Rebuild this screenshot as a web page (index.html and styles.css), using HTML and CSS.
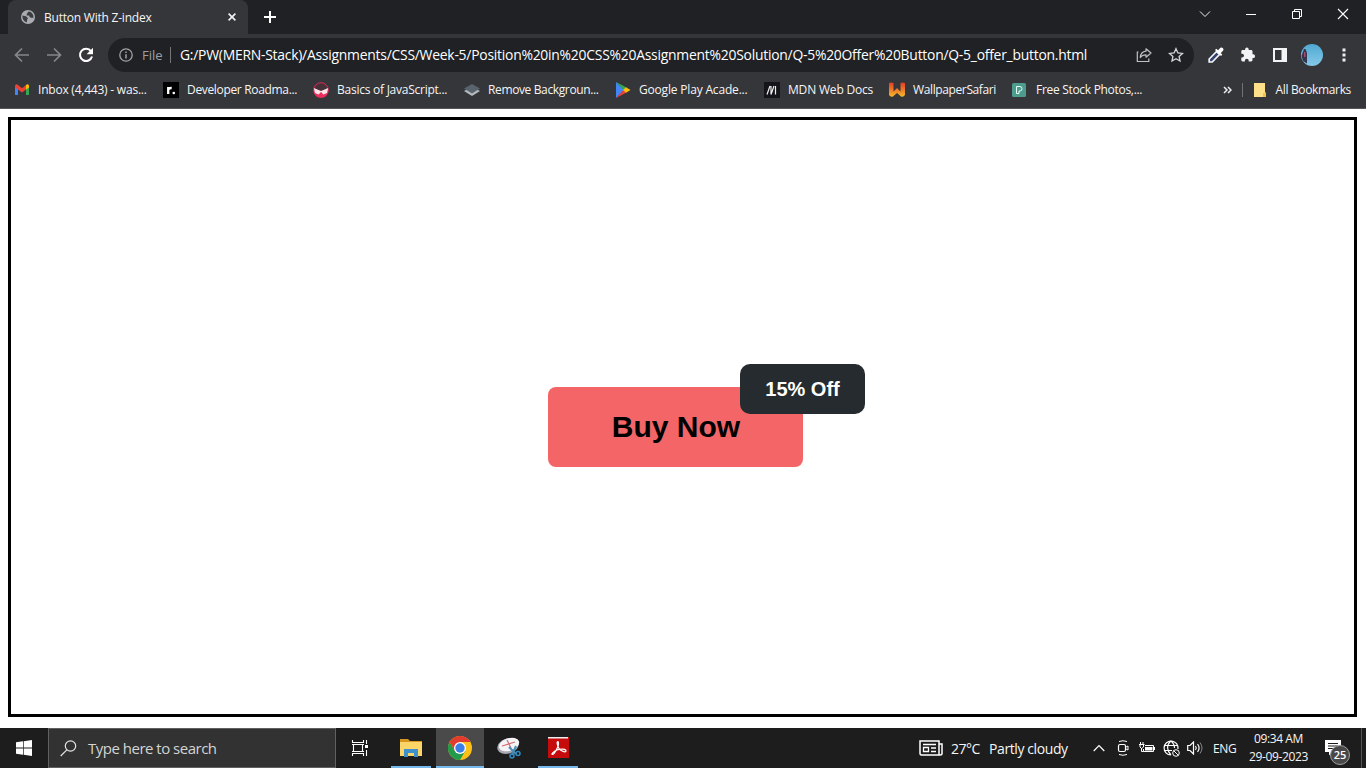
FILE: index.html
```html
<!DOCTYPE html>
<html lang="en">
<head>
<meta charset="utf-8">
<title>Button With Z-index</title>
<link rel="stylesheet" href="styles.css">
</head>
<body>
<header class="tabstrip">
  <div class="tab">
    <svg class="tab-icon" width="14" height="14" viewBox="0 0 14 14"><circle cx="7" cy="7" r="7" fill="#a9acb0"/><path d="M1.500 5.500l3.500.7 2 2-1 1.500v2.600C3 11.600 1.200 9 1.500 5.500zM7.500 1.500L6 3.500l-.5 2H8l1 2 3.300.5C13 4.500 10.500 1.700 7.500 1.500z" fill="#3c3d41"/></svg>
    <span class="tab-title">Button With Z-index</span>
    <svg class="tab-close" width="8" height="8" viewBox="0 0 8 8"><path d="M.6.6l6.800 6.800M7.400.6L.6 7.400" stroke="#f1f3f4" stroke-width="1.600"/></svg>
  </div>
  <svg class="new-tab" width="12" height="12" viewBox="0 0 12 12"><path d="M6 0v12M0 6h12" stroke="#fff" stroke-width="2"/></svg>
  <div class="window-controls">
    <svg width="12" height="12" viewBox="0 0 12 12"><path d="M1 3.500l5 5 5-5" fill="none" stroke="#eee"/></svg>
    <svg width="12" height="12" viewBox="0 0 12 12"><path d="M1 6.500h10" stroke="#fff"/></svg>
    <svg width="12" height="12" viewBox="0 0 12 12"><path d="M1.500 3.500h7v7h-7zM3.500 3.500v-2h7v7h-2" fill="none" stroke="#fff"/></svg>
    <svg width="12" height="12" viewBox="0 0 12 12"><path d="M1 1l10 10M11 1L1 11" stroke="#fff" stroke-width="1.100"/></svg>
  </div>
</header>
<nav class="toolbar">
  <svg class="nav-icon" width="16" height="16" viewBox="0 0 16 16"><path d="M15 8H2M8 1.500L1.500 8 8 14.500" fill="none" stroke="#85878b" stroke-width="1.700"/></svg>
  <svg class="nav-icon" width="16" height="16" viewBox="0 0 16 16"><path d="M1 8h13M8 1.500L14.500 8 8 14.500" fill="none" stroke="#85878b" stroke-width="1.700"/></svg>
  <svg class="nav-icon" width="16" height="16" viewBox="0 0 16 16"><path d="M13 4.200A6.100 6.100 0 1 0 14 9.500" fill="none" stroke="#fff" stroke-width="2"/><path d="M15 .8v6.400H8.600z" fill="#fff"/></svg>
  <div class="omnibox">
    <svg class="info" width="14" height="14" viewBox="0 0 14 14"><circle cx="7" cy="7" r="6.200" fill="none" stroke="#a0a3a7" stroke-width="1.300"/><path d="M7 6.200v4.300M7 3.500v1.500" stroke="#a0a3a7" stroke-width="1.500"/></svg>
    <span class="scheme">File</span>
    <span class="url">G:/PW(MERN-Stack)/Assignments/CSS/Week-5/Position%20in%20CSS%20Assignment%20Solution/Q-5%20Offer%20Button/Q-5_offer_button.html</span>
    <svg class="share" width="16" height="16" viewBox="0 0 16 16"><path d="M2.500 5H1.300v9.500h11.500v-3" fill="none" stroke="#bfc1c4" stroke-width="1.200"/><path d="M10 1.800L15 6l-5 4.200V7.800c-2.800 0-4.500.8-5.700 2.700.2-3.500 2-5.900 5.700-6.300z" fill="none" stroke="#bfc1c4" stroke-width="1.200" stroke-linejoin="round"/></svg>
    <svg class="star" width="16" height="16" viewBox="0 0 16 16"><path d="M8 1.700l1.900 4.200 4.600.5-3.400 3.100.9 4.500-4-2.300L4 14l.9-4.500L1.500 6.400l4.600-.5z" fill="none" stroke="#d5d7da" stroke-width="1.300"/></svg>
  </div>
  <div class="actions">
    <svg width="16" height="16" viewBox="0 0 16 16"><path d="M8.500 4.500l-7.300 7.500V15h3l7.300-7.500z" fill="#35446d" stroke="#f4f6ff" stroke-width="1.700"/><path d="M7 3l1.300-1.300L10 3.200 12.500.8c1.500-1 3.700 1 2.700 2.700L12.800 6l1.500 1.700L13 9z" fill="#fff"/></svg>
    <svg width="16" height="16" viewBox="0 0 16 16"><path d="M13.200 7.300h-.7V4.500c0-.8-.6-1.400-1.400-1.400H8.700v-.7a1.800 1.800 0 0 0-3.600 0v.7H2.600c-.8 0-1.300.6-1.300 1.400v2.200h.8a1.900 1.900 0 0 1 0 3.800h-.8v2.600c0 .8.500 1.400 1.300 1.400h2.300v-.8a1.900 1.900 0 0 1 3.800 0v.8h2.400c.8 0 1.400-.6 1.400-1.400V11h.7a1.850 1.850 0 0 0 0-3.700z" fill="#f1f3f4"/></svg>
    <svg width="16" height="16" viewBox="0 0 16 16"><path d="M1 1h14v14H1zM3 3v10h6.500V3z" fill="#f1f3f4" fill-rule="evenodd"/></svg>
    <svg class="avatar" width="22" height="22" viewBox="0 0 22 22"><defs><linearGradient id="sky" x2="0" y2="1"><stop stop-color="#4fa9d4"/><stop offset="1" stop-color="#86c9e7"/></linearGradient></defs><circle cx="11" cy="11" r="11" fill="url(#sky)"/><path d="M3 5h1.500l1.500 4v10.500L2 17 .5 12z" fill="#37344c"/><path d="M3 8h1.500v5H3z" fill="#a34d6c"/></svg>
    <svg class="menu" width="4" height="14" viewBox="0 0 4 14"><path d="M.5 .5h3v3h-3zM.5 5.500h3v3h-3zM.5 10.500h3v3h-3z" fill="#eee"/></svg>
  </div>
</nav>
<nav class="bookmarks">
  <div class="bookmark b1"><svg width="16" height="16" viewBox="0 0 16 16"><path d="M1 4v9h3V6z" fill="#4285f4"/><path d="M12 6v7h3V4z" fill="#34a853"/><path d="M1 3.500Q2.500 1.500 4 3l4 3.200L12 3v4.500l-4 3-4-3-3-2z" fill="#ea4335"/><path d="M12 3q2-1.500 3 .5v2l-3 2z" fill="#fbbc04"/></svg><span>Inbox (4,443) - was...</span></div>
  <div class="bookmark b2"><svg width="16" height="16" viewBox="0 0 16 16"><path d="M0 0h16v16H0z" fill="#000"/><path d="M5.200 12V5M5.200 8q.5-2.200 3.500-2" fill="none" stroke="#fff" stroke-width="2.300"/><circle cx="10.800" cy="11" r="1.300" fill="#fff"/></svg><span>Developer Roadma...</span></div>
  <div class="bookmark b3"><svg width="16" height="16" viewBox="0 0 16 16"><circle cx="8" cy="8" r="7.300" fill="#473139" stroke="#d92b57"/><path d="M.5 8L8 10.500 15.500 8Q15 15.500 8 15.700 1 15.500.5 8z" fill="#ee2d5f"/><path d="M.8 6L8 9l7.200-3-1.200 5-3.500 1.500L8 10l-2.500 2.500L2 11z" fill="#ffe3e9"/></svg><span>Basics of JavaScript...</span></div>
  <div class="bookmark b4"><svg width="16" height="16" viewBox="0 0 16 16"><path d="M0 9l8 5 8-5-8-4z" fill="#b6bbc0"/><path d="M0 6.500L8 2l8 4.500L8 11.500z" fill="#59636d"/></svg><span>Remove Backgroun...</span></div>
  <div class="bookmark b5"><svg width="16" height="16" viewBox="0 0 16 16"><path d="M1 0l8 8-8 8z" fill="#4285f4"/><path d="M1 0l10.500 5.500L8.500 8z" fill="#34a853"/><path d="M1 16l10.500-5.500L8.500 8z" fill="#ea4335"/><path d="M11 5.200L15.500 8 11 10.800 8 8z" fill="#fbbc04"/></svg><span>Google Play Acade...</span></div>
  <div class="bookmark b6"><svg width="16" height="16" viewBox="0 0 16 16"><path d="M0 0h16v16H0z" fill="#15141a"/><path d="M3 12.500L6 4M7 12.500V4M7 12.500L10 4M11.500 12.500V4" fill="none" stroke="#eee" stroke-width="1.200"/></svg><span>MDN Web Docs</span></div>
  <div class="bookmark b7"><svg width="16" height="16" viewBox="0 0 16 16"><defs><linearGradient id="flame" x2="0" y2="1"><stop stop-color="#e43b25"/><stop offset="1" stop-color="#f6b72b"/></linearGradient></defs><path d="M0 1q2-1 4.500 0v8.500L8 6l3.500 3.500V1Q14 0 16 1v12q-1.500 2.500-4 1.500L8 11l-4 3.500Q1.500 15.500 0 13z" fill="url(#flame)"/></svg><span>WallpaperSafari</span></div>
  <div class="bookmark b8"><svg width="16" height="16" viewBox="0 0 16 16"><rect x="0" y="1" width="14" height="14" rx="1.500" fill="#4e9c8e"/><path d="M4.500 4.500H8q2 0 2 2.200T8 9H7v2.500H4.500z" fill="none" stroke="#e3fff7"/></svg><span>Free Stock Photos,...</span></div>
  <div class="all-bookmarks">
    <svg class="more" width="9" height="8" viewBox="0 0 9 8"><path d="M1 1l3 3-3 3M5 1l3 3-3 3" fill="none" stroke="#eee" stroke-width="1.500"/></svg>
    <svg class="folder" width="12" height="14" viewBox="0 0 12 14"><path d="M0 0h11v9l1 1v4H0z" fill="#ffe08a"/><path d="M9 10h3v4H9z" fill="#eec34a"/></svg>
    <span>All Bookmarks</span>
  </div>
</nav>
<main class="page">
  <section class="container">
    <div class="buy-button">Buy Now<span class="offer">15% Off</span></div>
  </section>
</main>
<footer class="taskbar">
  <div class="start"><svg width="16" height="16" viewBox="0 0 16 16"><path d="M0 2.300l7-1v6.300H0zM7.700 1.200L16 0v7.600H7.700zM0 8.400h7v6.300l-7-1zM7.700 8.400H16V16l-8.300-1.200z" fill="#fff"/></svg></div>
  <div class="search"><svg width="17" height="17" viewBox="0 0 17 17"><circle cx="10.500" cy="6" r="5.200" fill="none" stroke="#e5e5e5" stroke-width="1.200"/><path d="M6.800 9.800L.7 16" stroke="#e5e5e5" stroke-width="1.200"/></svg><span>Type here to search</span></div>
  <div class="app task-view"><svg width="18" height="16" viewBox="0 0 18 16"><path d="M1.500 0v2.500h11V0M1.500 16v-2.500h11V16M2.500 4.500v7M11.500 4.500v7M1 4.500h12M1 11.500h12M15.500 0v4M15.500 10v6" fill="none" stroke="#fff" stroke-width="1.100"/><path d="M14 5h3v3h-3z" fill="#fff"/></svg></div>
  <div class="app open"><svg width="22" height="20" viewBox="0 0 22 20"><path d="M0 1h8l2 2h12v4H0z" fill="#d6951f"/><path d="M0 4h22v14H0z" fill="#fbd568"/><path d="M4 19v-8h14v8h-4v-4H8v4z" fill="#3f91ce"/></svg></div>
  <div class="app open current"><svg width="24" height="24" viewBox="0 0 24 24"><circle cx="12" cy="12" r="12" fill="#fbc116"/><path d="M1.600 6A12 12 0 0 0 12 24l5.200-9L12 12l-5.200 3z" fill="#229b4c"/><path d="M1.600 6A12 12 0 0 1 22.400 6H12L6.800 15z" fill="#e33b2e"/><circle cx="12" cy="12" r="6" fill="#fff"/><circle cx="12" cy="12" r="4.700" fill="#3b7fe8"/></svg></div>
  <div class="app"><svg width="24" height="22" viewBox="0 0 24 22"><ellipse cx="11" cy="9" rx="11" ry="7.500" transform="rotate(-18 11 9)" fill="#a8a8b2"/><ellipse cx="12" cy="7.500" rx="10.500" ry="6.200" transform="rotate(-18 12 7.500)" fill="#f4f3f5"/><path d="M5 9l13-4M10 3l4 8" stroke="#d76c76" stroke-width="1.200"/><path d="M12 10l7 7M19 9l-4 9" stroke="#4a8db4" stroke-width="2"/><circle cx="15" cy="19" r="2" fill="none" stroke="#328bc1" stroke-width="1.500"/><circle cx="21" cy="16.500" r="2" fill="none" stroke="#328bc1" stroke-width="1.500"/></svg></div>
  <div class="app open"><svg class="pdf" width="21" height="21" viewBox="0 0 21 21"><path d="M0 0h21v21H0z" fill="#c50b0b"/><path d="M0 0h20v1.500H0z" fill="#eee"/><path d="M10 4.500c-1.800 0-.4 4.500 1 7S18 16 18 14s-5-2.500-9-1-6 4.500-4.500 4.500S12.300 8 10 4.500z" fill="none" stroke="#fff" stroke-width="1.200"/></svg></div>
  <div class="tray">
    <svg class="news" width="24" height="17" viewBox="0 0 24 17"><path d="M1 1h19v14H2.500Q1 15 1 13.500zM20 4h3v9.500q0 1.500-2 1.500h-2" fill="none" stroke="#fff" stroke-width="1.500"/><path d="M4 4.500h13M12 8h5M12 11.500h5M4.500 7.500h5v4h-5z" fill="none" stroke="#fff" stroke-width="1.300"/></svg>
    <span class="temp">27°C</span><span class="sky">Partly cloudy</span>
    <svg class="chevron" width="12" height="8" viewBox="0 0 12 8"><path d="M.7 7L6 1.500 11.300 7" fill="none" stroke="#fff" stroke-width="1.200"/></svg>
    <svg class="meet" width="12" height="16" viewBox="0 0 12 16"><rect x="1.500" y="4.500" width="7" height="7" rx="1.500" fill="none" stroke="#fff" stroke-width="1.200"/><path d="M9 7l2-1v4L9 9M2 1.500q4-1.500 8 0M2 14.500q4 1.500 8 0" fill="none" stroke="#fff"/></svg>
    <svg class="battery" width="16" height="12" viewBox="0 0 16 12"><path d="M6 3.500h8.500v6h-10V7" fill="none" stroke="#fff"/><path d="M6 5h7.500v3.500H6zM15 5h1v3h-1z" fill="#fff"/><path d="M1.500 0v2.500M4 0v2.500M0 2.500h5.500M1 3v2l1.500 1.500L4.500 5V3M2.500 6v3.500h2" fill="none" stroke="#fff"/></svg>
    <svg class="globe" width="17" height="17" viewBox="0 0 17 17"><path d="M15 9A7 7 0 1 0 8 15M8 1c-5 4-4 10 0 14M8 1c3 2.500 3.500 5 3.500 7M1 5.500h13.500M1 10.500h8" fill="none" stroke="#fff" stroke-width="1.200"/><circle cx="13" cy="13" r="3.300" fill="#1d1d1d" stroke="#fff"/><path d="M10.700 10.700l4.600 4.600" stroke="#fff"/></svg>
    <svg class="volume" width="17" height="14" viewBox="0 0 17 14"><path d="M.7 4.500H3L6.500 1v12L3 9.500H.7z" fill="none" stroke="#fff" stroke-width="1.200"/><path d="M8.500 5q1.500 2 0 4M10.500 3q3.200 4 0 8" fill="none" stroke="#fff" stroke-width="1.200"/><path d="M13 1.500q4 5.500 0 11" fill="none" stroke="#888"/></svg>
    <span class="lang">ENG</span>
    <div class="clock"><span class="time">09:34 AM</span><span class="date">29-09-2023</span></div>
    <div class="notifications"><svg width="16" height="16" viewBox="0 0 16 16"><path d="M0 0h16v12H7l-3 3.500V12H0z" fill="#fff"/><path d="M3 3.500h10M3 6h10M3 8.500h10" stroke="#1d1d1d"/></svg><span class="count">25</span></div>
    <div class="show-desktop"></div>
  </div>
</footer>
</body>
</html>
```
FILE: styles.css
```css
* { box-sizing: border-box; }
body {
  margin: 0;
  height: 768px;
  display: flex;
  flex-direction: column;
  overflow: hidden;
  background: #fff;
  font: 12px "Segoe UI", "Open Sans", sans-serif;
  color: #f5f5f5;
  white-space: nowrap;
}
svg { display: block; flex: none; }
span { flex: none; }

.tabstrip { height: 34px; display: flex; align-items: center; background: #202124; padding: 0 17px 0 8px; }
.tab { width: 240px; height: 34px; display: flex; align-items: center; padding: 0 12px 0 13px; background: #35363a; border-radius: 8px 8px 0 0; }
.tab-title { margin-left: 9px; letter-spacing: -.22px; }
.tab-close { margin-left: auto; }
.new-tab { margin-left: 16px; }
.window-controls { display: flex; gap: 34px; margin: -6px 0 0 auto; }

.toolbar { height: 42px; display: flex; align-items: center; padding: 0 0 0 14px; background: #35363a; }
.nav-icon { margin-right: 16px; }
.nav-icon + .nav-icon + .nav-icon { margin-right: 14px; }
.omnibox { width: 1086px; height: 34px; display: flex; align-items: center; padding: 0 10px 0 11px; border-radius: 17px; background: #202124; font-size: 14px; }
.scheme { width: 29px; margin-left: 9px; height: 16px; line-height: 16px; border-right: 1px solid #74767a; color: #9aa0a6; font-size: 13px; }
.url { margin-left: 9px; letter-spacing: -.24px; font-size: 13.9px; line-height: 18px; margin-top: -1px; color: #fff; }
.share { margin-left: auto; }
.star { margin-left: 16px; }
.actions { display: flex; align-items: center; gap: 16px; margin-left: 14px; }
.avatar { margin-left: -3px; }
.menu { margin-left: 3px; }

.bookmarks { height: 33px; display: flex; align-items: center; padding: 0 15px 5px 14px; background: #35363a; border-bottom: 1px solid #55565a; }
.bookmark { display: flex; align-items: center; gap: 8px; flex: none; width: 150px; letter-spacing: -.33px; }
.b1 { width: 149px; letter-spacing: -.22px; }
.b2 { width: 150px; }
.b3 { width: 151px; letter-spacing: -.25px; }
.b4 { width: 151px; letter-spacing: -.37px; }
.b5 { width: 149px; letter-spacing: -.18px; }
.b6 { width: 125px; letter-spacing: -.18px; }
.b7 { width: 123px; letter-spacing: -.38px; }
.b8 { width: 132px; letter-spacing: -.3px; }
.all-bookmarks { display: flex; align-items: center; margin-left: auto; letter-spacing: -.35px; }
.more { margin-right: 10px; }
.folder { box-sizing: content-box; padding-left: 11px; border-left: 1px solid #717276; margin-right: 10px; }

.page { flex: 1; padding: 8px 9px 11px 8px; display: flex; }
.container { flex: 1; border: 3px solid #000; padding: 267px 0 0 537px; }
.buy-button { position: relative; width: 255px; height: 80px; display: flex; align-items: center; justify-content: center; padding-left: 1px; border-radius: 8px; background: #f36567; color: #000; font: bold 30px "Liberation Sans", Arial, sans-serif; }
.offer { position: absolute; z-index: 1; top: -23px; right: -62px; width: 125px; height: 50px; display: flex; align-items: center; justify-content: center; border-radius: 10px; background: #252b2e; color: #fff; font-size: 20px; }

.taskbar { height: 40px; display: flex; background: #1d1d1d; }
.start { width: 48px; display: flex; align-items: center; justify-content: center; }
.search { width: 288px; display: flex; align-items: center; gap: 11px; padding-left: 11px; background: #323232; border: 1px solid #606060; color: #d4d4d4; font-size: 15px; letter-spacing: -.5px; }
.app { width: 48px; display: flex; align-items: center; justify-content: center; border: solid transparent; border-width: 0 4px; flex: none; margin-right: 1px; }
.task-view { margin-right: 3px; }
.open { box-shadow: inset 0 -2px #76b9ed; }
.current { background: #4a4a4a; border: 0; }
.pdf { margin-top: -2px; }

.tray { display: flex; align-items: center; margin-left: auto; height: 40px; }
.temp { width: 38px; margin-left: 8px; font-size: 14px; letter-spacing: -.5px; }
.sky { width: 79px; font-size: 14px; letter-spacing: -.4px; }
.chevron { margin-left: 25px; }
.meet { margin-left: 12px; }
.battery { margin-left: 10px; }
.globe { margin-left: 8px; }
.volume { margin-left: 7px; }
.lang { width: 23px; margin-left: 9px; letter-spacing: -.3px; }
.clock { width: 59px; margin: -1px 0 0 13px; display: flex; flex-direction: column; align-items: center; line-height: 18px; }
.time { letter-spacing: -.4px; }
.date { letter-spacing: -.35px; }
.notifications { position: relative; width: 36px; margin-left: 17px; }
.count { position: absolute; left: 5px; top: 5px; width: 20px; height: 20px; border: 1px solid #a0a0a0; border-radius: 50%; background: #484848; color: #fff; font-size: 11px; font-weight: 600; line-height: 18px; text-align: center; }
.show-desktop { width: 5px; height: 40px; border-left: 1px solid #555; }
```
